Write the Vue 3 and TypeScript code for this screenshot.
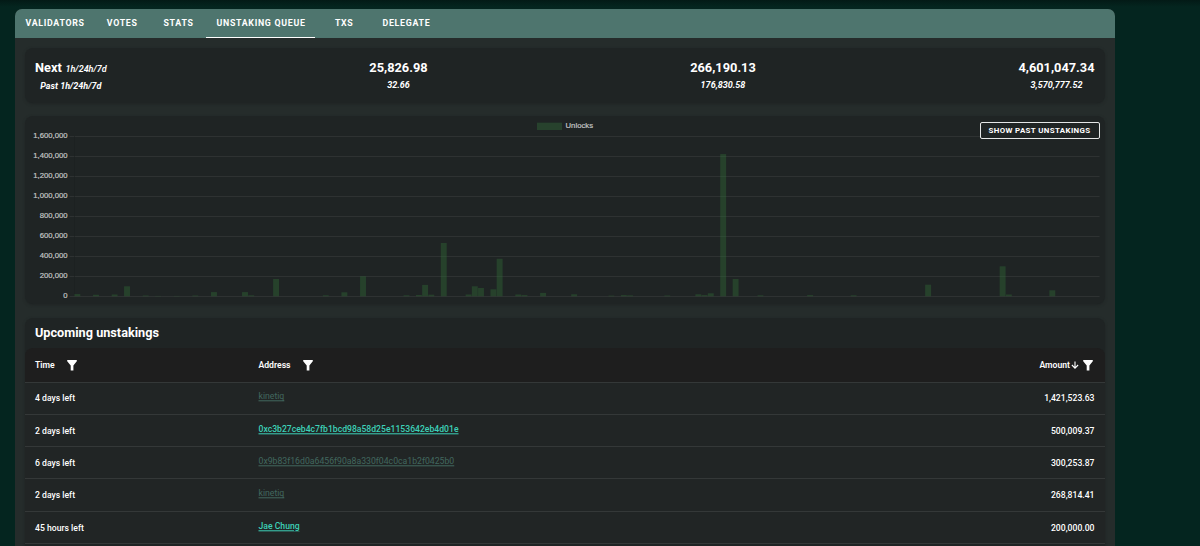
<script setup lang="ts">
const tabs = [
  { label: 'Validators', cls: 'validators' },
  { label: 'Votes', cls: 'votes' },
  { label: 'Stats', cls: 'stats' },
  { label: 'Unstaking queue', cls: 'active' },
  { label: 'Txs', cls: 'txs' },
  { label: 'Delegate', cls: 'delegate' },
]

const ticks = [1600, 1400, 1200, 1000, 800, 600, 400, 200, 0].map((v, i) => ({
  label: (v * 1000).toLocaleString('en-US'),
  y: 20.5 + i * 20,
}))

// [hour slot, bar height]
const bars: [number, number][] = [
  [0, 2.2], [3, 1.5], [6, 1.8], [8, 10], [11, 0.8], [13, 0.4], [16, 0.4], [19, 0.8], [22, 4.2],
  [27, 4.2], [28, 1], [32, 17.3], [40, 1], [43, 4], [46, 20], [53, 1], [55, 1.3],
  [56, 11.4], [57, 1.6], [59, 53.3], [63, 1.8], [64, 10], [65, 8.3], [67, 7],
  [68, 37.5], [71, 1.8], [72, 1.2], [75, 3.4], [80, 2], [86, 0.7], [88, 1.2], [89, 0.9],
  [95, 0.8], [100, 2], [101, 1.2], [102, 3], [104, 142.2], [106, 17.3], [110, 1],
  [118, 1.2], [125, 1], [137, 11.6], [149, 30], [150, 1.8], [157, 6],
]
const barX = (slot: number) => 49.4 + slot * 6.21

const rows = [
  { time: '4 days left', address: 'kinetiq', amount: '1,421,523.63', muted: true },
  { time: '2 days left', address: '0xc3b27ceb4c7fb1bcd98a58d25e1153642eb4d01e', amount: '500,009.37', muted: false },
  { time: '6 days left', address: '0x9b83f16d0a6456f90a8a330f04c0ca1b2f0425b0', amount: '300,253.87', muted: true },
  { time: '2 days left', address: 'kinetiq', amount: '268,814.41', muted: true },
  { time: '45 hours left', address: 'Jae Chung', amount: '200,000.00', muted: false },
]
const funnel = 'M0.2 0H9.8V1.3L6.4 5.4V10.4H3.7V5.4L0.2 1.3Z'
</script>

<template>
  <div class="page">
    <main class="panel">
      <nav class="tabs">
        <a v-for="t in tabs" :key="t.label" class="tab" :class="t.cls">{{ t.label }}</a>
      </nav>

      <section class="card summary">
        <div class="stat">
          <div class="big">Next <i>1h/24h/7d</i></div>
          <div class="small">Past 1h/24h/7d</div>
        </div>
        <div class="stat"><div class="big">25,826.98</div><div class="small">32.66</div></div>
        <div class="stat"><div class="big">266,190.13</div><div class="small">176,830.58</div></div>
        <div class="stat"><div class="big">4,601,047.34</div><div class="small">3,570,777.52</div></div>
      </section>

      <section class="card chart">
        <svg width="1080" height="188" viewBox="0 0 1080 188">
          <rect x="512" y="6.7" width="25" height="7.3" fill="#27422d" />
          <text x="540.5" y="12" class="legend" textLength="27.5">Unlocks</text>
          <g v-for="t in ticks" :key="t.label">
            <text x="42.5" :y="t.y + 1.6" class="tick">{{ t.label }}</text>
            <line x1="44.5" x2="1074.5" :y1="t.y" :y2="t.y" stroke="#2e3232" />
          </g>
          <line x1="49.5" x2="49.5" y1="20" y2="180" stroke="#1b2020" stroke-width=".6" />
          <rect
            v-for="b in bars" :key="b[0]" :x="barX(b[0])" :y="180.3 - b[1]"
            width="5.9" :height="b[1]" fill="#2f6b38" fill-opacity=".42"
          />
        </svg>
        <button class="toggle">Show past unstakings</button>
      </section>

      <section class="card upcoming">
        <h2>Upcoming unstakings</h2>
        <div class="table">
          <div class="row head">
            <span class="time">Time<svg class="funnel wide" viewBox="0 0 10 11"><path :d="funnel" /></svg></span>
            <span class="addr">Address<svg class="funnel wide" viewBox="0 0 10 11"><path :d="funnel" /></svg></span>
            <span class="amount">Amount<svg class="arrow" viewBox="0 0 8 8"><path d="M4 .5V7M.9 4L4 7.1L7.1 4" /></svg><svg class="funnel" viewBox="0 0 10 11"><path :d="funnel" /></svg></span>
          </div>
          <div v-for="(r, i) in rows" :key="i" class="row">
            <span class="time">{{ r.time }}</span>
            <span class="addr"><a :class="{ muted: r.muted }">{{ r.address }}</a></span>
            <span class="amount">{{ r.amount }}</span>
          </div>
        </div>
      </section>
    </main>
  </div>
</template>

<style>
html, body { margin: 0; overflow: hidden; background: #04251f; }
</style>

<style scoped>
.page {
  box-sizing: border-box;
  height: 546px;
  overflow: hidden;
  padding: 9px 85.5px 0 15px;
  background: linear-gradient(#031a16, #04251f 7px);
  color: #fff;
  font-family: Roboto, "Liberation Sans", sans-serif;
}
.panel {
  height: 560px;
  border-radius: 7px 7px 0 0;
  background: #252c2b;
  overflow: hidden;
}
.tabs { display: flex; height: 29px; background: #4e756e; }
.tab {
  box-sizing: border-box;
  height: 29px;
  padding: 0 10.5px;
  border-bottom: 1px solid transparent;
  font-size: 8.8px;
  line-height: 29px;
  font-weight: 700;
  letter-spacing: .71px;
  text-transform: uppercase;
  white-space: nowrap;
}
.validators { width: 81.3px; }
.votes { width: 56.7px; }
.stats { width: 53px; }
.active { width: 109.4px; border-bottom-color: #fff; }
.txs { width: 56.6px; padding-left: 19.5px; }
.card {
  margin: 0 9.5px 0 10px;
  border-radius: 8px;
  background: #1f2424;
  box-shadow: 0 1px 3px #1f2424;
}
.summary {
  display: flex;
  justify-content: space-between;
  box-sizing: border-box;
  height: 55px;
  margin-top: 10px;
  padding: 11px 10.5px 0 10px;
}
.stat { text-align: center; }
.big { font-size: 12.8px; line-height: 18px; font-weight: 700; }
.big i { font-size: 9px; font-weight: 600; margin-left: .5px; }
.small { font-size: 9px; line-height: 16px; font-weight: 700; font-style: italic; }
.stat:first-child .small { margin-top: -.5px; }
.chart { position: relative; height: 188px; margin-top: 13px; }
.chart svg { display: block; }
.tick, .legend {
  font-family: "Liberation Sans", Arial, sans-serif;
  font-size: 7.7px;
  fill: #c3c5c5;
  stroke: #c3c5c5;
  stroke-width: .2px;
}
.tick { text-anchor: end; }
.toggle {
  position: absolute;
  top: 6px;
  right: 5.5px;
  box-sizing: border-box;
  width: 120px;
  height: 17px;
  padding: 0;
  border: 1px solid #e4e6e6;
  border-radius: 2px;
  background: #1f2424;
  color: #fff;
  font: 700 7.9px/15px Roboto, sans-serif;
  letter-spacing: .38px;
  text-transform: uppercase;
  white-space: nowrap;
}
.upcoming { height: 260px; margin-top: 14px; }
h2 { margin: 0; height: 30px; padding-left: 10px; font-size: 12.7px; line-height: 29px; font-weight: 700; }
.table { border-radius: 8px 8px 0 0; background: #212525; overflow: hidden; }
.row {
  display: grid;
  grid-template-columns: 223.5px 1fr 200px;
  align-items: center;
  box-sizing: border-box;
  height: 32.3px;
  padding: .6px 10.5px 0 10px;
  border-bottom: 1px solid #343838;
  font-size: 8.65px;
  font-weight: 500;
}
.head { height: 34.5px; background: #1e1e1e; font-weight: 600; }
.row > span { display: flex; align-items: center; }
.row .amount { justify-content: flex-end; }
.addr a { color: #3dd1b8; text-decoration: underline; transform: translateY(-1.7px); }
.addr a.muted { color: #42685f; font-weight: 400; font-size: 8.7px; }
.funnel { width: 10px; height: 11px; fill: #fff; margin-left: 4px; margin-right: 1.5px; }
.funnel.wide { margin-left: 12.7px; }
.arrow { width: 8px; height: 8px; margin-left: 1px; fill: none; stroke: #fff; stroke-width: 1.1; }
</style>
